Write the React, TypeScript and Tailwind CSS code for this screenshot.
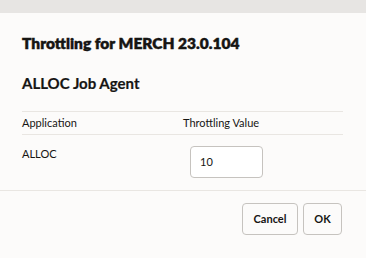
import React from "react";

export default function App() {
  const font = { fontFamily: 'Lato, "Noto Sans", sans-serif' };
  return (
    <div className="w-[366px] h-[258px] bg-[#fcfbfa] text-[#161513] flex flex-col overflow-hidden" style={font}>
      <div className="h-[13px] bg-[#e7e5e3] shrink-0" />
      <div className="px-[22px] pt-[19px]">
        <h1 className="text-[15.5px] leading-[23px] font-extrabold [-webkit-text-stroke:0.4px_#161513]">Throttling for MERCH 23.0.104</h1>
        <h2 className="mt-[17px] text-[15px] leading-[22px] font-bold [-webkit-text-stroke:0.2px_#161513]">ALLOC Job Agent</h2>
        <div className="mt-[17px] w-[321px] border-t border-[#e9e6e2]">
          <div className="flex h-[23px] items-center text-[11px] border-b border-[#e9e6e2]">
            <div className="w-[161px]">Application</div>
            <div>Throttling Value</div>
          </div>
          <div className="flex pt-[11px] text-[11px]">
            <div className="w-[168px] leading-[16px]">ALLOC</div>
            <div className="w-[73px] h-[32px] border border-[#c6c3bf] rounded-[4px] bg-white flex items-center px-[9px]">10</div>
          </div>
        </div>
      </div>
      <div className="mt-[12px] border-t border-[#e9e6e2]" />
      <div className="flex justify-end gap-[5px] pr-[24px] pt-[12px]">
        <button className="w-[56px] h-[32px] border border-[#c6c3bf] rounded-[4px] text-[11px] font-bold bg-[#fcfbfa]">Cancel</button>
        <button className="w-[39px] h-[32px] border border-[#c6c3bf] rounded-[4px] text-[11px] font-bold bg-[#fcfbfa]">OK</button>
      </div>
    </div>
  );
}
